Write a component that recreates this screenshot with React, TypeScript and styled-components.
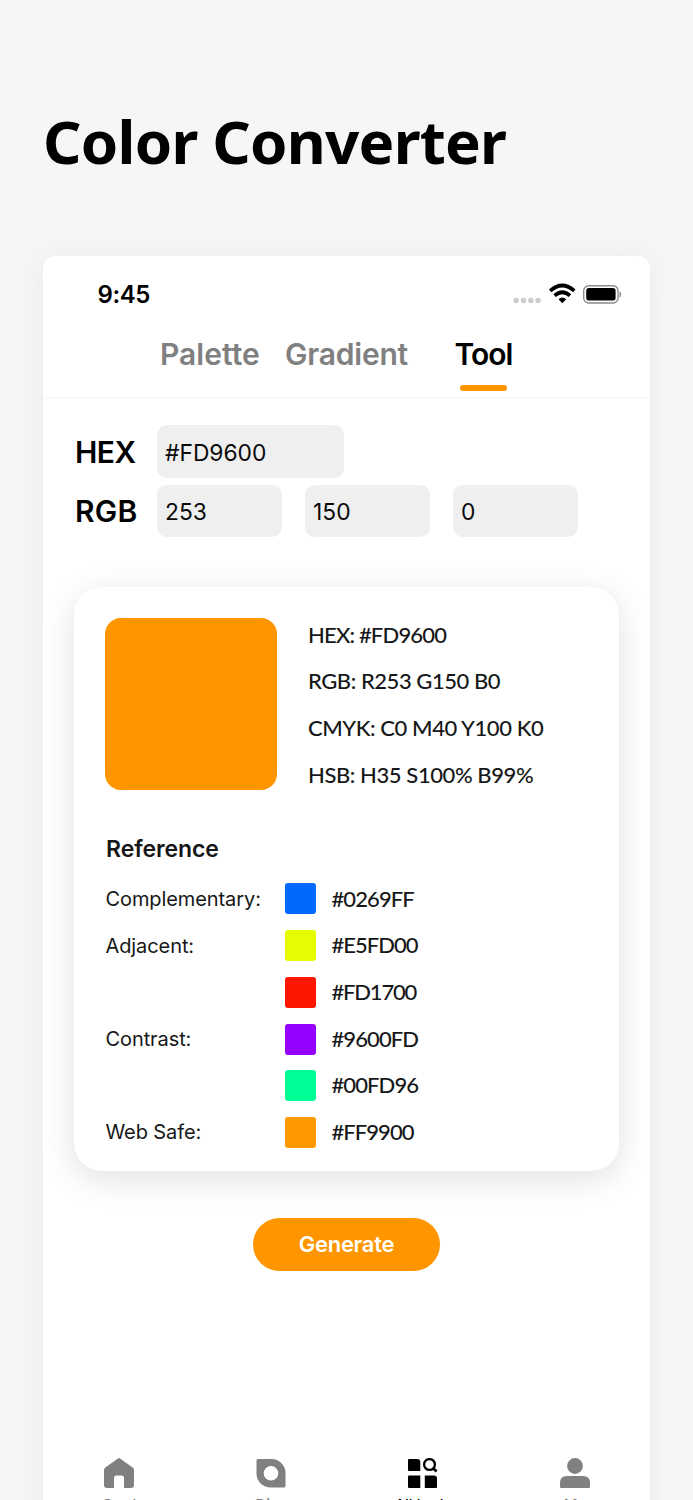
import React, { useState } from "react";
import styled, { createGlobalStyle } from "styled-components";

const Global = createGlobalStyle`
  * { box-sizing: border-box; }
  body { margin: 0; background: #f4f6f8; font-family: Inter, "Liberation Sans", sans-serif; }
`;

const Page = styled.main`
  width: 693px;
  height: 1500px;
  overflow: hidden;
  padding: 0 43px;
  background: #f4f6f8;
`;

const Title = styled.h1`
  margin: 0;
  height: 255.7px;
  padding: 97px 0 0 0;
  font: 700 60px/88px "Noto Sans", sans-serif;
  letter-spacing: -0.75px;
  white-space: nowrap;
  color: #000;
`;

const Screen = styled.section`
  width: 607px;
  height: 1314px;
  display: flex;
  flex-direction: column;
  background: #fff;
  border-radius: 12px;
  box-shadow: 0 0 30px rgba(0, 0, 0, 0.05);
`;

const StatusBar = styled.header`
  height: 70px;
  flex: none;
  display: flex;
  align-items: flex-start;
  justify-content: space-between;
  padding: 24px 28px 0 54.5px;
`;

const Clock = styled.span`
  font-size: 24px;
  line-height: 30px;
  font-weight: 600;
  letter-spacing: -0.4px;
`;

const Tabs = styled.nav`
  height: 72px;
  flex: none;
  display: flex;
  padding-left: 117px;
  border-bottom: 1px solid #f7f7f7;
  box-shadow: 0 1px 3px rgba(0, 0, 0, 0.02);
`;

const Tab = styled.button<{ $active?: boolean; $width: number; $track: number }>`
  display: flex;
  flex-direction: column;
  align-items: flex-start;
  justify-content: flex-start;
  width: ${(p) => p.$width}px;
  height: 66px;
  padding: 9.300px 0 0;
  border: 0;
  background: none;
  font: 600 30px/38px Inter, sans-serif;
  letter-spacing: ${(p) => p.$track}px;
  color: ${(p) => (p.$active ? "#000" : "#808080")};
  &::after {
    content: "";
    display: ${(p) => (p.$active ? "block" : "none")};
    width: 47px;
    height: 6px;
    margin: 12px 0 0 5px;
    border-radius: 3px;
    background: #ff9600;
  }
`;

const Form = styled.form`
  display: grid;
  gap: 6.6px;
  padding: 27.8px 32px 0;
`;

const FieldRow = styled.div`
  display: flex;
  align-items: center;
  height: 52.6px;
  gap: 23px;
`;

const FieldLabel = styled.span<{ $track: number }>`
  width: 82px;
  margin-right: -23px;
  font-size: 30px;
  font-weight: 600;
  letter-spacing: ${(p) => p.$track}px;
`;

const Input = styled.input<{ $wide?: boolean }>`
  width: ${(p) => (p.$wide ? 187 : 125)}px;
  height: 52.6px;
  padding: 1px 8px 0;
  border: 0;
  border-radius: 10px;
  background: #efefef;
  font: 400 22.8px Inter, sans-serif;
  color: #0b0b0b;
`;

const Card = styled.section`
  width: 545px;
  height: 583.7px;
  flex: none;
  margin: 49.8px 0 0 31px;
  padding: 31px;
  border-radius: 28px;
  background: #fff;
  box-shadow: 0 8px 34px rgba(0, 0, 0, 0.12);
`;

const Summary = styled.div`
  display: flex;
  gap: 31px;
  height: 172px;
`;

const Swatch = styled.div`
  width: 172px;
  height: 171.6px;
  border-radius: 16px;
  background: #ff9600;
`;

const Values = styled.div`
  display: flex;
  flex-direction: column;
  margin-top: -6.500px;
`;

const Value = styled.span<{ $track?: number }>`
  font: 500 22px/46.7px Lato, sans-serif;
  letter-spacing: ${(p) => p.$track ?? 0}px;
  white-space: nowrap;
  color: #161718;
`;

const Heading = styled.h2`
  margin: 42.400px 0 17px 1px;
  font-size: 23px;
  line-height: 34px;
  font-weight: 600;
  letter-spacing: -0.08px;
  color: #161718;
`;

const RefRow = styled.div`
  display: flex;
  align-items: center;
  height: 31px;
  margin-bottom: 15.7px;
`;

const RefName = styled.span`
  width: 180px;
  padding-left: 0.5px;
  font-size: 20px;
  letter-spacing: -0.09px;
  color: #161718;
`;

const Chip = styled.i<{ $color: string }>`
  width: 31px;
  height: 31px;
  margin-right: 15.500px;
  border-radius: 3px;
  background: ${(p) => p.$color};
`;

const Generate = styled.button`
  width: 187px;
  height: 53px;
  flex: none;
  margin: 47px 0 0 210px;
  border: 0;
  border-radius: 27px;
  background: #ff9600;
  color: #fff;
  font: 600 22px Inter, sans-serif;
  letter-spacing: -0.3px;
`;

const BottomNav = styled.nav`
  display: grid;
  grid-template-columns: repeat(4, 152px);
  margin-top: 187px;
`;

const NavItem = styled.div<{ $active?: boolean }>`
  display: flex;
  flex-direction: column;
  align-items: center;
  gap: 8px;
  font-size: 15px;
  line-height: 18px;
  font-weight: 500;
  color: ${(p) => (p.$active ? "#000" : "#808080")};
`;

const StatusIcons = () => (
  <svg width="109" height="24" viewBox="0 0 109 24">
    <g fill="#ccc">
      {[3.2, 10.5, 17.8, 25.1].map((x) => (
        <circle key={x} cx={x} cy="20.5" r="2.7" />
      ))}
    </g>
    <g fill="none" stroke="#000" strokeWidth="3.7">
      <path d="M37.2 10.8 Q49.3 0.2 61.3 10.8" />
      <path d="M41.6 15.6 Q49.3 8.8 57 15.6" />
    </g>
    <path d="M45.5 19.3 Q49.3 15.900 53.2 19.3 L49.3 23.2z" />
    <rect x="70.700" y="5.700" width="34.4" height="17.3" rx="5" fill="none" stroke="#8c8c8c" strokeWidth="1.4" />
    <rect x="73.200" y="8.100" width="29.4" height="12.500" rx="2.8" />
    <path d="M106.900 11.800q2.200 2.600 0 5.200z" fill="#8c8c8c" stroke="#8c8c8c" strokeWidth=".6" />
  </svg>
);

const HomeIcon = () => (
  <svg width="30" height="30" viewBox="0 0 30 30" fill="currentColor">
    <path d="M14 .4q1-.7 2 0l12.700 9.1q1.300 1 1.300 2.500v15q0 3-3 3h-7V20q0-2.500-2.500-2.500h-5Q10 17.500 10 20v10H3q-3 0-3-3V12q0-1.500 1.300-2.500z" />
  </svg>
);

const DropIcon = () => (
  <svg width="30" height="30" viewBox="0 0 30 30" fill="currentColor">
    <path fillRule="evenodd" d="M2 1H15A14 14 0 0 1 29.500 15V28q0 1.500-1.500 1.500H15A14 14 0 0 1 .5 15V2.500Q.5 1 2 1zM15 8a7.300 7.300 0 1 0 0 14.600a7.300 7.300 0 0 0 0-14.600z" />
  </svg>
);

const ToolIcon = () => (
  <svg width="30" height="30" viewBox="0 0 30 30" fill="currentColor">
    <path d="M1 1h8q3.300 0 3.300 3v9H1q-1 0-1-1V2q0-1 1-1zM1 17.500h11.300V30H1q-1 0-1-1V18.500q0-1 1-1zM16.800 17.500h9.200q3 0 3 3V29q0 1-1 1H16.800z" />
    <circle cx="21.500" cy="6.500" r="5.400" fill="none" stroke="currentColor" strokeWidth="2.300" />
    <path d="M25.200 10.300L28.600 13.500" stroke="currentColor" strokeWidth="2.600" />
  </svg>
);

const UserIcon = () => (
  <svg width="30" height="30" viewBox="0 0 30 30" fill="currentColor">
    <circle cx="15" cy="8" r="7.900" />
    <path d="M7 18H23Q30 18 30 25V29q0 1-1 1H1q-1 0-1-1V25Q0 18 7 18z" />
  </svg>
);

const values = [
  { text: "HEX: #FD9600", track: -0.82 },
  { text: "RGB: R253 G150 B0", track: -0.45 },
  { text: "CMYK: C0 M40 Y100 K0", track: -0.42 },
  { text: "HSB: H35 S100% B99%", track: -0.42 },
];

const references = [
  { name: "Complementary:", color: "#0269FF", track: -0.9 },
  { name: "Adjacent:", color: "#E5FD00", track: -1 },
  { name: "", color: "#FD1700", track: -1.2 },
  { name: "Contrast:", color: "#9600FD", track: -0.9 },
  { name: "", color: "#00FD96", track: -0.9 },
  { name: "Web Safe:", color: "#FF9900", track: -0.95 },
];

export default function App() {
  const [hex, setHex] = useState("#FD9600");
  const [rgb, setRgb] = useState(["253", "150", "0"]);

  return (
    <Page>
      <Global />
      <Title>Color Converter</Title>
      <Screen>
        <StatusBar>
          <Clock>9:45</Clock>
          <StatusIcons />
        </StatusBar>
        <Tabs>
          <Tab $width={125} $track={0.03}>Palette</Tab>
          <Tab $width={169.5} $track={-0.2}>Gradient</Tab>
          <Tab $width={70} $track={-1} $active>Tool</Tab>
        </Tabs>
        <Form>
          <FieldRow>
            <FieldLabel $track={-0.5}>HEX</FieldLabel>
            <Input $wide value={hex} onChange={(e) => setHex(e.target.value)} />
          </FieldRow>
          <FieldRow>
            <FieldLabel $track={0.2}>RGB</FieldLabel>
            {rgb.map((v, i) => (
              <Input
                key={i}
                value={v}
                onChange={(e) => setRgb(rgb.map((old, j) => (i === j ? e.target.value : old)))}
              />
            ))}
          </FieldRow>
        </Form>
        <Card>
          <Summary>
            <Swatch />
            <Values>
              {values.map((v) => (
                <Value key={v.text} $track={v.track}>{v.text}</Value>
              ))}
            </Values>
          </Summary>
          <Heading>Reference</Heading>
          {references.map((r) => (
            <RefRow key={r.color}>
              <RefName>{r.name}</RefName>
              <Chip $color={r.color} />
              <Value $track={r.track}>{r.color}</Value>
            </RefRow>
          ))}
        </Card>
        <Generate>Generate</Generate>
        <BottomNav>
          <NavItem><HomeIcon />Card</NavItem>
          <NavItem><DropIcon />Disc</NavItem>
          <NavItem $active><ToolIcon />All tools</NavItem>
          <NavItem><UserIcon />Me</NavItem>
        </BottomNav>
      </Screen>
    </Page>
  );
}
